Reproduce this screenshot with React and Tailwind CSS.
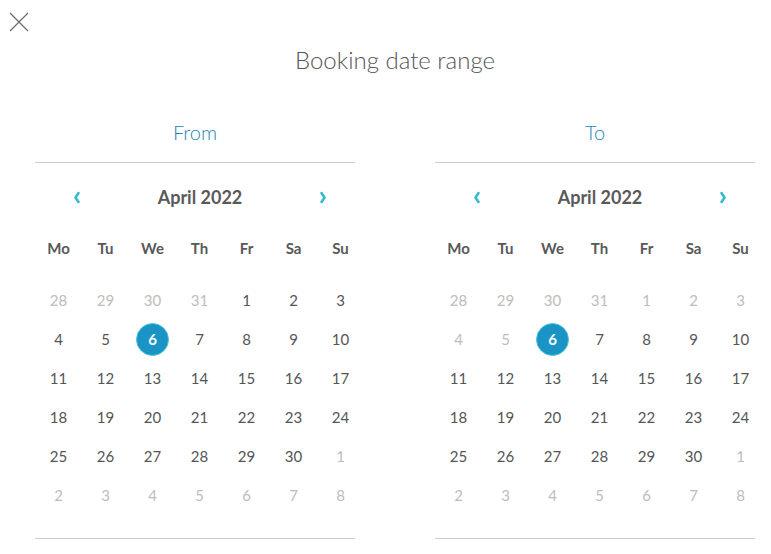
import React from 'react'

const font = { fontFamily: 'Lato, "Open Sans", sans-serif' }

const DAYS = ['Mo', 'Tu', 'We', 'Th', 'Fr', 'Sa', 'Su']

const buildWeeks = (disablePast) => {
  const cells = []
  ;[28, 29, 30, 31].forEach((d) => cells.push({ d, muted: true }))
  for (let d = 1; d <= 30; d++) {
    cells.push({ d, muted: disablePast && d < 6, selected: d === 6 })
  }
  for (let d = 1; d <= 8; d++) cells.push({ d, muted: true })
  const weeks = []
  for (let i = 0; i < cells.length; i += 7) weeks.push(cells.slice(i, i + 7))
  return weeks
}

const Chevron = ({ dir }) => (
  <svg width="8" height="13" viewBox="0 0 8 13" className="text-[#36b9cc]">
    <path
      d={dir === 'left' ? 'M5.5 2 L2.5 6.5 L5.5 11' : 'M2.5 2 L5.5 6.5 L2.5 11'}
      fill="none"
      stroke="currentColor"
      strokeWidth="2.6"
      strokeLinecap="round"
      strokeLinejoin="round"
    />
  </svg>
)

const Calendar = ({ label, disablePast }) => {
  const weeks = buildWeeks(disablePast)
  return (
    <div className="w-[320px] flex flex-col">
      <div className="h-[43px] text-center text-[20px] leading-[24px] font-light text-[#2485b5] border-b border-[#cccccc]">
        {label}
      </div>
      <div className="w-[329px]">
        <div className="h-[68px] flex items-center justify-between pl-[38px] pr-[37px]">
          <Chevron dir="left" />
          <span className="text-[18px] font-bold text-[#595959]">April 2022</span>
          <Chevron dir="right" />
        </div>
        <div className="grid grid-cols-[repeat(7,47px)] h-[34px] items-center mb-[16px]">
          {DAYS.map((d) => (
            <div key={d} className="text-center text-[15px] font-bold text-[#595959]">{d}</div>
          ))}
        </div>
        {weeks.map((w, i) => (
          <div key={i} className="grid grid-cols-[repeat(7,47px)] h-[39px] items-center">
            {w.map((c, j) => (
              <div key={j} className="flex justify-center">
                {c.selected ? (
                  <span className="w-[33px] h-[33px] rounded-full bg-[#1a94c4] border border-[#4ec5dc] flex items-center justify-center text-white text-[15px] font-bold">
                    {c.d}
                  </span>
                ) : (
                  <span className={`text-[15px] ${c.muted ? 'text-[#bdbdbd]' : 'text-[#555555]'}`}>{c.d}</span>
                )}
              </div>
            ))}
          </div>
        ))}
      </div>
      <div className="mt-[23px] border-b border-[#cccccc]" />
    </div>
  )
}

export default function App() {
  return (
    <div className="relative w-[771px] h-[554px] bg-white overflow-hidden" style={font}>
      <button className="absolute left-[9px] top-[12px] w-[20px] h-[20px]">
        <svg width="20" height="20" viewBox="0 0 20 20">
          <path d="M1 1 L19 19 M19 1 L1 19" stroke="#6b6b6b" strokeWidth="1.2" fill="none" />
        </svg>
      </button>
      <div className="pl-[35px] pr-[16px] pt-[44px]">
        <h1 className="text-center text-[24px] leading-[32px] font-light text-[#555555]">Booking date range</h1>
        <div className="mt-[44px] flex justify-between">
          <Calendar label="From" />
          <Calendar label="To" disablePast />
        </div>
      </div>
    </div>
  )
}
